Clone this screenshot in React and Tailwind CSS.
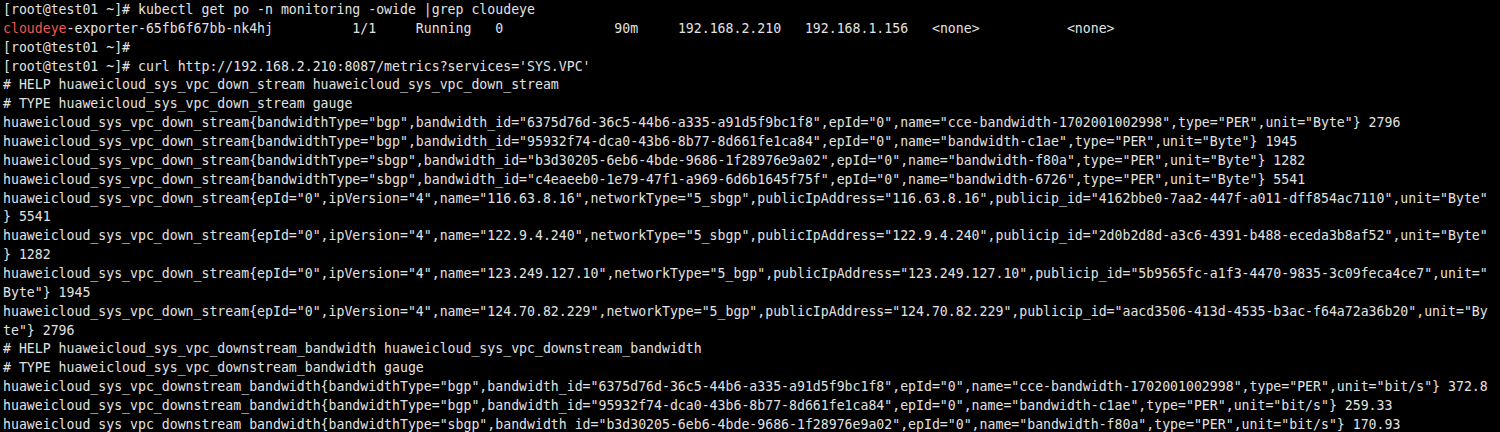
const lines = [
  '[root@test01 ~]# kubectl get po -n monitoring -owide |grep cloudeye',
  null,
  '[root@test01 ~]# ',
  "[root@test01 ~]# curl http://192.168.2.210:8087/metrics?services='SYS.VPC'",
  '# HELP huaweicloud_sys_vpc_down_stream huaweicloud_sys_vpc_down_stream',
  '# TYPE huaweicloud_sys_vpc_down_stream gauge',
  'huaweicloud_sys_vpc_down_stream{bandwidthType="bgp",bandwidth_id="6375d76d-36c5-44b6-a335-a91d5f9bc1f8",epId="0",name="cce-bandwidth-1702001002998",type="PER",unit="Byte"} 2796',
  'huaweicloud_sys_vpc_down_stream{bandwidthType="bgp",bandwidth_id="95932f74-dca0-43b6-8b77-8d661fe1ca84",epId="0",name="bandwidth-c1ae",type="PER",unit="Byte"} 1945',
  'huaweicloud_sys_vpc_down_stream{bandwidthType="sbgp",bandwidth_id="b3d30205-6eb6-4bde-9686-1f28976e9a02",epId="0",name="bandwidth-f80a",type="PER",unit="Byte"} 1282',
  'huaweicloud_sys_vpc_down_stream{bandwidthType="sbgp",bandwidth_id="c4eaeeb0-1e79-47f1-a969-6d6b1645f75f",epId="0",name="bandwidth-6726",type="PER",unit="Byte"} 5541',
  'huaweicloud_sys_vpc_down_stream{epId="0",ipVersion="4",name="116.63.8.16",networkType="5_sbgp",publicIpAddress="116.63.8.16",publicip_id="4162bbe0-7aa2-447f-a011-dff854ac7110",unit="Byte"',
  '} 5541',
  'huaweicloud_sys_vpc_down_stream{epId="0",ipVersion="4",name="122.9.4.240",networkType="5_sbgp",publicIpAddress="122.9.4.240",publicip_id="2d0b2d8d-a3c6-4391-b488-eceda3b8af52",unit="Byte"',
  '} 1282',
  'huaweicloud_sys_vpc_down_stream{epId="0",ipVersion="4",name="123.249.127.10",networkType="5_bgp",publicIpAddress="123.249.127.10",publicip_id="5b9565fc-a1f3-4470-9835-3c09feca4ce7",unit="',
  'Byte"} 1945',
  'huaweicloud_sys_vpc_down_stream{epId="0",ipVersion="4",name="124.70.82.229",networkType="5_bgp",publicIpAddress="124.70.82.229",publicip_id="aacd3506-413d-4535-b3ac-f64a72a36b20",unit="By',
  'te"} 2796',
  '# HELP huaweicloud_sys_vpc_downstream_bandwidth huaweicloud_sys_vpc_downstream_bandwidth',
  '# TYPE huaweicloud_sys_vpc_downstream_bandwidth gauge',
  'huaweicloud_sys_vpc_downstream_bandwidth{bandwidthType="bgp",bandwidth_id="6375d76d-36c5-44b6-a335-a91d5f9bc1f8",epId="0",name="cce-bandwidth-1702001002998",type="PER",unit="bit/s"} 372.8',
  'huaweicloud_sys_vpc_downstream_bandwidth{bandwidthType="bgp",bandwidth_id="95932f74-dca0-43b6-8b77-8d661fe1ca84",epId="0",name="bandwidth-c1ae",type="PER",unit="bit/s"} 259.33',
  'huaweicloud_sys_vpc_downstream_bandwidth{bandwidthType="sbgp",bandwidth_id="b3d30205-6eb6-4bde-9686-1f28976e9a02",epId="0",name="bandwidth-f80a",type="PER",unit="bit/s"} 170.93',
];

// kubectl -owide row, padded to the column widths of the table
const podRow =
  '-exporter-65fb6f67bb-nk4hj'.padEnd(44 - 8) +
  '1/1'.padEnd(8) +
  'Running'.padEnd(10) +
  '0'.padEnd(15) +
  '90m'.padEnd(8) +
  '192.168.2.210'.padEnd(16) +
  '192.168.1.156'.padEnd(16) +
  '<none>'.padEnd(17) +
  '<none>';

const App = () => {
  return (
    <div className="w-[1500px] h-[432px] overflow-hidden bg-black text-[#e2e2e2] pl-[3px] pt-[1px] font-['DejaVu_Sans_Mono',monospace] text-[13.2px] leading-[18.86px]">
      {lines.map((line, i) =>
        line === null ? (
          <div key={i} className="whitespace-pre">
            <span className="text-[#f4564f]">cloudeye</span>
            {podRow}
          </div>
        ) : (
          <div key={i} className="whitespace-pre">
            {line}
          </div>
        )
      )}
    </div>
  );
};

export default App;
